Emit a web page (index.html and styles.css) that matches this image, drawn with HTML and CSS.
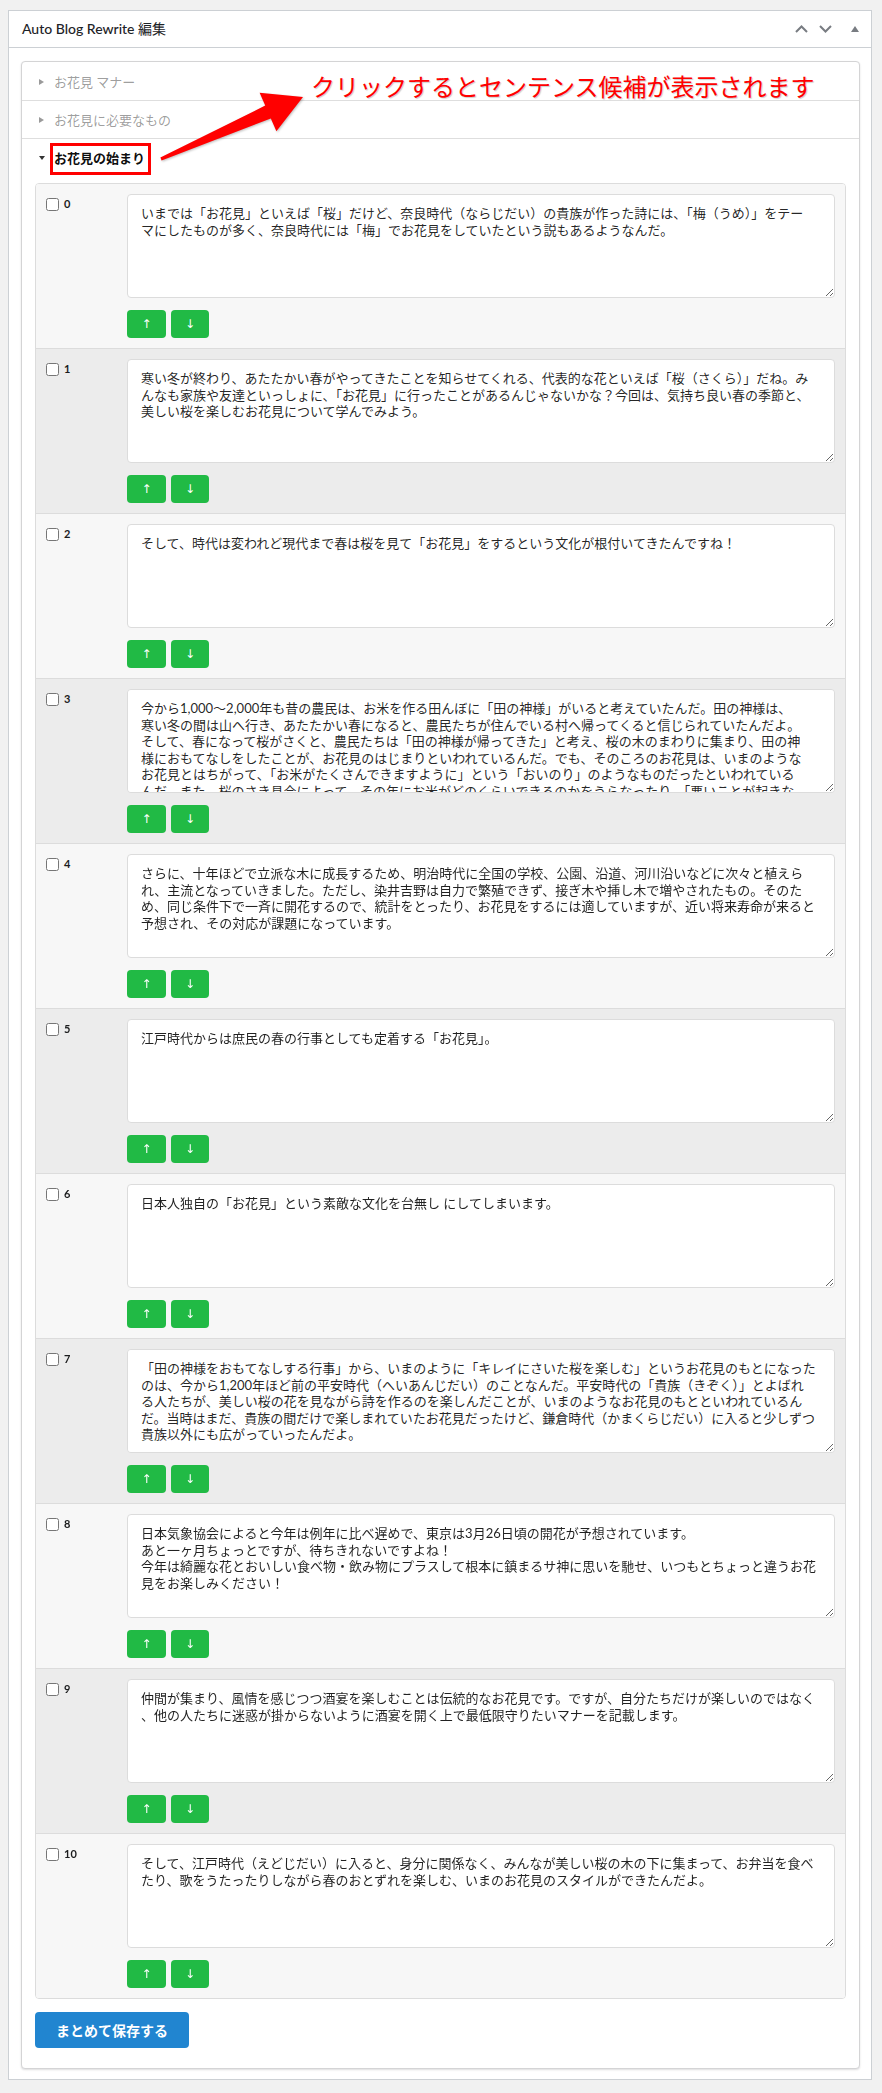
FILE: index.html
```html
<!DOCTYPE html>
<html lang="ja">
<head>
<meta charset="utf-8">
<title>Auto Blog Rewrite 編集</title>
<link rel="stylesheet" href="styles.css">
</head>
<body>
<div class="page">
  <div class="postbox">
    <div class="postbox-header">
      <h2 class="hndle">Auto Blog Rewrite <span class="hndle-ja">編集</span></h2>
      <div class="handle-actions">
        <span class="ha ha-up"><svg width="13" height="8" viewBox="0 0 13 8"><path d="M1 7 L6.5 1.5 L12 7" fill="none" stroke="#787c82" stroke-width="2"/></svg></span>
        <span class="ha ha-down"><svg width="13" height="8" viewBox="0 0 13 8"><path d="M1 1 L6.5 6.5 L12 1" fill="none" stroke="#787c82" stroke-width="2"/></svg></span>
        <span class="ha ha-toggle"><svg width="8" height="6" viewBox="0 0 8 6"><path d="M4 0 L8 6 L0 6 Z" fill="#787c82"/></svg></span>
      </div>
    </div>
    <div class="inside">
      <div class="accordion">
        <div class="acc-title"><span class="dd dd-right"></span>お花見 マナー</div>
        <div class="acc-title"><span class="dd dd-right"></span>お花見に必要なもの</div>
        <div class="acc-title active"><span class="dd dd-down"></span><span class="redbox">お花見の始まり</span></div>
        <div class="acc-content">
          <div class="sentences">
            <div class="item">
              <div class="item-left"><input type="checkbox" id="s0"><label for="s0">0</label></div>
              <div class="item-main">
                <textarea>いまでは「お花見」といえば「桜」だけど、奈良時代（ならじだい）の貴族が作った詩には、「梅（うめ）」をテー
マにしたものが多く、奈良時代には「梅」でお花見をしていたという説もあるようなんだ。</textarea>
                <div class="btns"><button class="btn-g">↑</button><button class="btn-g btn-g2">↓</button></div>
              </div>
            </div>
            <div class="item">
              <div class="item-left"><input type="checkbox" id="s1"><label for="s1">1</label></div>
              <div class="item-main">
                <textarea>寒い冬が終わり、あたたかい春がやってきたことを知らせてくれる、代表的な花といえば「桜（さくら）」だね。み
んなも家族や友達といっしょに、「お花見」に行ったことがあるんじゃないかな？今回は、気持ち良い春の季節と、
美しい桜を楽しむお花見について学んでみよう。</textarea>
                <div class="btns"><button class="btn-g">↑</button><button class="btn-g btn-g2">↓</button></div>
              </div>
            </div>
            <div class="item">
              <div class="item-left"><input type="checkbox" id="s2"><label for="s2">2</label></div>
              <div class="item-main">
                <textarea>そして、時代は変われど現代まで春は桜を見て「お花見」をするという文化が根付いてきたんですね！</textarea>
                <div class="btns"><button class="btn-g">↑</button><button class="btn-g btn-g2">↓</button></div>
              </div>
            </div>
            <div class="item">
              <div class="item-left"><input type="checkbox" id="s3"><label for="s3">3</label></div>
              <div class="item-main">
                <textarea>今から1,000～2,000年も昔の農民は、お米を作る田んぼに「田の神様」がいると考えていたんだ。田の神様は、
寒い冬の間は山へ行き、あたたかい春になると、農民たちが住んでいる村へ帰ってくると信じられていたんだよ。
そして、春になって桜がさくと、農民たちは「田の神様が帰ってきた」と考え、桜の木のまわりに集まり、田の神
様におもてなしをしたことが、お花見のはじまりといわれているんだ。でも、そのころのお花見は、いまのような
お花見とはちがって、「お米がたくさんできますように」という「おいのり」のようなものだったといわれている
んだ。また、桜のさき具合によって、その年にお米がどのくらいできるのかをうらなったり、「悪いことが起きな
いように」とおいのりしたりしていたんだって。</textarea>
                <div class="btns"><button class="btn-g">↑</button><button class="btn-g btn-g2">↓</button></div>
              </div>
            </div>
            <div class="item">
              <div class="item-left"><input type="checkbox" id="s4"><label for="s4">4</label></div>
              <div class="item-main">
                <textarea>さらに、十年ほどで立派な木に成長するため、明治時代に全国の学校、公園、沿道、河川沿いなどに次々と植えら
れ、主流となっていきました。ただし、染井吉野は自力で繁殖できず、接ぎ木や挿し木で増やされたもの。そのた
め、同じ条件下で一斉に開花するので、統計をとったり、お花見をするには適していますが、近い将来寿命が来ると
予想され、その対応が課題になっています。</textarea>
                <div class="btns"><button class="btn-g">↑</button><button class="btn-g btn-g2">↓</button></div>
              </div>
            </div>
            <div class="item">
              <div class="item-left"><input type="checkbox" id="s5"><label for="s5">5</label></div>
              <div class="item-main">
                <textarea>江戸時代からは庶民の春の行事としても定着する「お花見」。</textarea>
                <div class="btns"><button class="btn-g">↑</button><button class="btn-g btn-g2">↓</button></div>
              </div>
            </div>
            <div class="item">
              <div class="item-left"><input type="checkbox" id="s6"><label for="s6">6</label></div>
              <div class="item-main">
                <textarea>日本人独自の「お花見」という素敵な文化を台無し にしてしまいます。</textarea>
                <div class="btns"><button class="btn-g">↑</button><button class="btn-g btn-g2">↓</button></div>
              </div>
            </div>
            <div class="item">
              <div class="item-left"><input type="checkbox" id="s7"><label for="s7">7</label></div>
              <div class="item-main">
                <textarea>「田の神様をおもてなしする行事」から、いまのように「キレイにさいた桜を楽しむ」というお花見のもとになった
のは、今から1,200年ほど前の平安時代（へいあんじだい）のことなんだ。平安時代の「貴族（きぞく）」とよばれ
る人たちが、美しい桜の花を見ながら詩を作るのを楽しんだことが、いまのようなお花見のもとといわれているん
だ。当時はまだ、貴族の間だけで楽しまれていたお花見だったけど、鎌倉時代（かまくらじだい）に入ると少しずつ
貴族以外にも広がっていったんだよ。</textarea>
                <div class="btns"><button class="btn-g">↑</button><button class="btn-g btn-g2">↓</button></div>
              </div>
            </div>
            <div class="item">
              <div class="item-left"><input type="checkbox" id="s8"><label for="s8">8</label></div>
              <div class="item-main">
                <textarea>日本気象協会によると今年は例年に比べ遅めで、東京は3月26日頃の開花が予想されています。
あと一ヶ月ちょっとですが、待ちきれないですよね！
今年は綺麗な花とおいしい食べ物・飲み物にプラスして根本に鎮まるサ神に思いを馳せ、いつもとちょっと違うお花
見をお楽しみください！</textarea>
                <div class="btns"><button class="btn-g">↑</button><button class="btn-g btn-g2">↓</button></div>
              </div>
            </div>
            <div class="item">
              <div class="item-left"><input type="checkbox" id="s9"><label for="s9">9</label></div>
              <div class="item-main">
                <textarea>仲間が集まり、風情を感じつつ酒宴を楽しむことは伝統的なお花見です。ですが、自分たちだけが楽しいのではなく
、他の人たちに迷惑が掛からないように酒宴を開く上で最低限守りたいマナーを記載します。</textarea>
                <div class="btns"><button class="btn-g">↑</button><button class="btn-g btn-g2">↓</button></div>
              </div>
            </div>
            <div class="item">
              <div class="item-left"><input type="checkbox" id="s10"><label for="s10">10</label></div>
              <div class="item-main">
                <textarea>そして、江戸時代（えどじだい）に入ると、身分に関係なく、みんなが美しい桜の木の下に集まって、お弁当を食べ
たり、歌をうたったりしながら春のおとずれを楽しむ、いまのお花見のスタイルができたんだよ。</textarea>
                <div class="btns"><button class="btn-g">↑</button><button class="btn-g btn-g2">↓</button></div>
              </div>
            </div>
          </div>
          <button class="save">まとめて保存する</button>
        </div>
      </div>
    </div>
  </div>

  <svg class="annot-arrow" width="882" height="200" viewBox="0 0 882 200">
    <polygon points="161.6,160.4 270.8,118.4 276.4,131.3 303,96.9 259.6,92.7 265.2,105.6 160.4,157.6" fill="#ff0000"/>
  </svg>
  <div class="annot-text">クリックするとセンテンス候補が表示されます</div>
</div>
</body>
</html>
```

FILE: styles.css
```css
* {
  box-sizing: border-box;
}

body {
  margin: 0;
  background: #f1f1f1;
  font-family: Lato, "Noto Sans CJK JP", sans-serif;
  color: rgba(0, 0, 0, 0.87);
}

.page {
  position: relative;
  padding: 10px 10px 14px 8px;
}

.postbox {
  background: #fff;
  border: 1px solid #ccd0d4;
}

.postbox-header {
  display: flex;
  align-items: center;
  justify-content: space-between;
  height: 37px;
  border-bottom: 1px solid #ccd0d4;
}

.hndle {
  margin: 0;
  padding: 0 12px 0 13px;
  font-size: 14px;
  font-weight: 500;
  line-height: 20px;
  color: #1d2327;
}

.hndle-ja {
  font-weight: 400;
}

.handle-actions {
  display: flex;
  height: 36px;
}

.ha {
  display: flex;
  align-items: center;
  justify-content: center;
  height: 36px;
}

.ha-up {
  width: 23px;
}

.ha-down {
  width: 25px;
}

.ha-toggle {
  width: 33px;
}

.inside {
  padding: 13px 11px 10px 12px;
}

.accordion {
  background: #fff;
  border: 1px solid #d4d4d5;
  border-radius: 4px;
  box-shadow: 0 1px 2px rgba(34, 36, 38, 0.15);
}

.acc-title {
  display: flex;
  align-items: center;
  padding: 10px 13px 9px;
  font-size: 13px;
  line-height: 18px;
  color: rgba(0, 0, 0, 0.4);
  border-top: 1px solid #dedede;
}

.acc-title:first-child {
  border-top: 0;
  padding-top: 11px;
}

.acc-title.active {
  color: rgba(0, 0, 0, 0.95);
  font-weight: 700;
  padding-bottom: 10px;
}

.dd {
  width: 19px;
  flex: none;
  display: flex;
  align-items: center;
  height: 18px;
}

.dd::before {
  content: "";
  display: block;
  margin-left: 4px;
  width: 0;
  height: 0;
}

.dd-right::before {
  border-top: 3px solid transparent;
  border-bottom: 3px solid transparent;
  border-left: 5px solid #9a9a9a;
}

.dd-down::before {
  border-left: 3.5px solid transparent;
  border-right: 3.5px solid transparent;
  border-top: 4px solid #333;
}

.redbox {
  position: relative;
}

.redbox::after {
  content: "";
  position: absolute;
  left: -4px;
  top: -6px;
  right: -6px;
  bottom: -8px;
  border: 3px solid #ff0000;
}

.acc-content {
  padding: 6px 13px 20px;
}

.sentences {
  border: 1px solid #dcdcdc;
  border-radius: 4px;
  overflow: hidden;
}

.item {
  display: flex;
  padding: 10px;
  background: #f7f7f7;
  border-bottom: 1px solid #dcdcdc;
}

.item:nth-child(even) {
  background: #ececec;
}

.item:last-child {
  border-bottom: 0;
}

.item-left {
  width: 81px;
  flex: none;
  display: flex;
  align-items: flex-start;
}

.item-left input {
  margin: 4px 5px 0 0;
  width: 13px;
  height: 13px;
}

.item-left label {
  margin-top: 2px;
  font-size: 11px;
  font-weight: 700;
  line-height: 16px;
  color: #1b1c1d;
}

.item-main {
  flex: 1;
  min-width: 0;
  display: flex;
  flex-direction: column;
}

.item-main textarea {
  display: block;
  width: 100%;
  height: 104px;
  margin: 0;
  padding: 10px 13px;
  border: 1px solid #dcdcdc;
  border-radius: 4px;
  background: #fff;
  font-family: Lato, "Noto Sans CJK JP", sans-serif;
  font-size: 13px;
  line-height: 16.5px;
  color: rgba(0, 0, 0, 0.87);
  white-space: pre;
  overflow-x: hidden;
  overflow-y: auto;
}

.btns {
  display: flex;
  gap: 5px;
  margin-top: 12px;
}

.btn-g {
  width: 39px;
  height: 28px;
  padding: 0;
  border: 0;
  border-radius: 4px;
  background: #21ba45;
  color: #fff;
  font-family: "DejaVu Sans", sans-serif;
  font-size: 12px;
}

.btn-g2 {
  width: 38px;
}

.save {
  display: block;
  margin-top: 13px;
  width: 154px;
  height: 36px;
  padding: 0;
  border: 0;
  border-radius: 4px;
  background: #2185d0;
  color: #fff;
  font-family: Lato, "Noto Sans CJK JP", sans-serif;
  font-size: 14px;
  font-weight: 700;
}

.annot-arrow {
  position: absolute;
  left: 0;
  top: 0;
  pointer-events: none;
  filter: drop-shadow(1px 1px 1px rgba(0, 0, 0, 0.25));
}

.annot-text {
  position: absolute;
  left: 311px;
  top: 72px;
  font-family: "Noto Sans CJK JP", sans-serif;
  font-size: 24px;
  line-height: 28px;
  color: #ff0000;
  white-space: nowrap;
  text-shadow: 1px 1px 1px rgba(0, 0, 0, 0.2);
}
```
